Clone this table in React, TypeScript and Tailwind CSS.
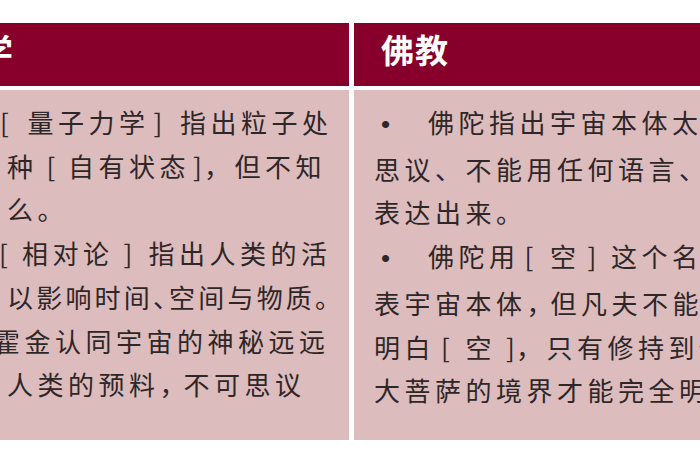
import * as React from 'react'

// 方括号单独占一个字位，字形在字位内的位置按原图微调
function Line({ className = '', children }: { className?: string; children: React.ReactNode }) {
  return <div className={`whitespace-nowrap ${className}`}>{children}</div>
}

function Bullet() {
  return <span className="inline-block w-[54px] pl-[7px] font-['Liberation_Sans',sans-serif]">•</span>
}

export default function App() {
  return (
    <div className="h-[470px] w-[700px] overflow-hidden bg-white pt-[23px] font-['Noto_Sans_CJK_SC','Noto_Sans_CJK_TC',sans-serif]">
      <div className="ml-[-60px] grid grid-cols-[409px_346px] grid-rows-[63px_350px] gap-x-[5px] gap-y-[4px]">
        {/* header */}
        <div className="overflow-hidden whitespace-nowrap bg-[#87002b] pl-[6px] pt-[10px] text-[33px] font-bold leading-none tracking-[1px] text-white">
          科学
        </div>
        <div className="overflow-hidden whitespace-nowrap bg-[#87002b] pl-[27px] pt-[10px] text-[33px] font-bold leading-none tracking-[1px] text-white">
          佛教
        </div>

        {/* body */}
        <div className="overflow-hidden bg-[#dcbcbc] pl-[67px] pt-[10px] text-[26px] leading-[43.7px] tracking-[4.5px] text-[#2f2628]">
          <Line className="ml-[-10px]">
            <span className="inline-block w-[30.5px] pl-[3px]">[</span>量子力学
            <span className="inline-block w-[30.5px] pl-[4px]">]</span>指出粒子处
          </Line>
          <Line>
            种<span className="inline-block w-[30.5px] pl-[9px]">[</span>自有状态
            <span className="inline-block w-[14px] pl-[3px]">]</span>，但不知
          </Line>
          <Line>么。</Line>
          <Line className="ml-[-17px]">
            <span className="inline-block w-[32px] pl-[9px]">[</span>相对论
            <span className="inline-block w-[35px] pl-[10px]">]</span>指出人类的活
          </Line>
          <Line className="tracking-[3.2px]">
            以影响时间<span className="tracking-[-10px]">、</span>空间与物质。
          </Line>
          <Line className="ml-[-13px]">霍金认同宇宙的神秘远远</Line>
          <Line>
            人类的预料<span className="tracking-[-2px]">，</span>不可思议
          </Line>
        </div>

        <div className="overflow-hidden bg-[#dcbcbc] pl-[20px] pt-[10px] text-[26px] leading-[43.7px] tracking-[4.5px] text-[#2f2628]">
          <Line>
            <Bullet />
            佛陀指出宇宙本体太不可
          </Line>
          <Line>思议、不能用任何语言、文字</Line>
          <Line>表达出来。</Line>
          <Line>
            <Bullet />
            佛陀用<span className="inline-block w-[30.5px] pl-[5px]">[</span>空
            <span className="inline-block w-[30.5px] pl-[7px]">]</span>这个名词代
          </Line>
          <Line>
            表宇宙本体<span className="tracking-[-2px]">，</span>但凡夫不能够
          </Line>
          <Line>
            明白<span className="inline-block w-[30.5px] pl-[6px]">[</span>空
            <span className="inline-block w-[20px] pl-[10px]">]</span>，只有修持到佛
          </Line>
          <Line>大菩萨的境界才能完全明白</Line>
        </div>
      </div>
    </div>
  )
}
